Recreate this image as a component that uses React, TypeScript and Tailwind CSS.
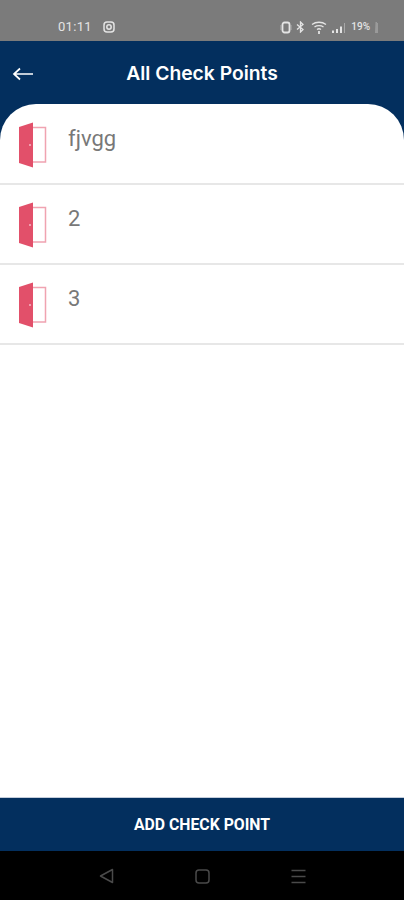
export default function App() {
  const rows = ["fjvgg", "2", "3"];
  return (
    <div className="flex h-[900px] w-[404px] flex-col overflow-hidden bg-white" style={{ fontFamily: "Roboto, sans-serif" }}>
      <div className="flex h-[41px] shrink-0 items-end justify-between bg-[#7b7b7b] pb-[6px] pl-[58px] pr-[26px] text-[#e4e4e4]">
        <div className="flex items-center gap-[11px]">
          <span className="text-[13px] leading-[16px] tracking-[0.3px]">01:11</span>
          <svg width="12" height="12" viewBox="0 0 12 12" fill="none" stroke="#e4e4e4" strokeWidth="1.5">
            <rect x="1" y="1" width="10" height="10" rx="3" />
            <circle cx="6" cy="6" r="2.2" />
          </svg>
        </div>
        <div className="flex items-center gap-[4px]">
          <svg width="12" height="13" viewBox="0 0 12 13" fill="none">
            <rect x="2.5" y="1.5" width="7" height="10" rx="2" stroke="#e4e4e4" strokeWidth="1.8" />
            <path d="M1 4v5M11 4v5" stroke="#bdbdbd" strokeWidth="0.8" />
          </svg>
          <svg width="9" height="12" viewBox="0 0 9 12" fill="none" stroke="#e4e4e4" strokeWidth="1.3">
            <path d="M1 3.5l6 5L4.5 11V1L7 3.500l-6 5" />
          </svg>
          <svg width="17" height="13" viewBox="0 0 17 13" fill="none" stroke="#e4e4e4" strokeWidth="1.3" className="ml-[2px]">
            <path d="M1 3.500C5 .5 11 .5 15 3.500M3.500 6C6 4.200 10 4.200 12.500 6M6 8.500C7.200 7.600 8.800 7.600 10 8.500" />
            <path d="M8 10v3" strokeWidth="1.800" />
          </svg>
          <svg width="14" height="10" viewBox="0 0 14 10" fill="#e4e4e4" className="mt-[2px]">
            <rect x="0" y="7.500" width="2" height="2.500" />
            <rect x="4" y="6" width="2" height="4" />
            <rect x="8" y="3.500" width="2" height="6.500" />
            <rect x="12" y="0" width="1" height="10" fill="#a8a8a8" />
          </svg>
          <span className="ml-[1px] text-[10px] font-medium leading-[16px]">19%</span>
          <svg width="4" height="11" viewBox="0 0 4 11" fill="#a8a8a8">
            <path d="M1.500 0h1.500v1H4v10H1z" opacity="0.7" />
          </svg>
        </div>
      </div>

      <div className="relative flex h-[63px] shrink-0 items-start bg-[#032f5e]">
        <svg width="22" height="14" viewBox="0 0 22 14" fill="none" stroke="#ffffff" strokeWidth="1.700" className="absolute left-[12px] top-[26px]">
          <path d="M21 7H2M8 1.500L2 7l6 5.500" />
        </svg>
        <div className="mt-[19px] w-full text-center text-[19.300px] font-semibold leading-[26px] text-white" style={{ fontFamily: "Inter, sans-serif" }}>
          All Check Points
        </div>
      </div>

      <div className="flex-1 bg-[#032f5e]">
        <div className="h-full rounded-t-[36px] bg-white">
          {rows.map((r, i) => (
            <div key={i} className="flex items-start border-b-2 border-[#e7e7e7] pl-[18px]" style={{ height: i === 0 ? 81 : 80 }}>
              <svg width="29" height="46" viewBox="0 0 29 46" fill="none" className={i === 0 ? "mt-[18px]" : "mt-[17px]"}>
                <path d="M14 5.500H27.500V40H14" stroke="#f0a3b1" strokeWidth="1.500" />
                <path d="M1 5L15 0.500V45.500L1 41Z" fill="#e2506a" />
                <circle cx="12" cy="23" r="1" fill="#f6b8c4" />
              </svg>
              <span className={`ml-[21px] text-[22px] font-normal leading-[28px] text-[#787878] ${i === 0 ? "mt-[21px]" : "mt-[20px]"}`}>{r}</span>
            </div>
          ))}
        </div>
      </div>

      <div className="flex h-[54px] shrink-0 items-center justify-center border-t border-[#c4cddb] bg-[#032f5e] text-[15.800px] font-bold text-white">
        ADD CHECK POINT
      </div>

      <div className="flex h-[49px] shrink-0 items-center bg-black">
        <svg width="15" height="16" viewBox="0 0 15 16" fill="none" stroke="#4a4a4a" strokeWidth="1.500" className="ml-[99px] mt-[1px]">
          <path d="M13.500 1.500V14.500L1.500 8Z" strokeLinejoin="round" />
        </svg>
        <svg width="15" height="15" viewBox="0 0 15 15" fill="none" stroke="#4a4a4a" strokeWidth="1.500" className="ml-[81px] mt-[1px]">
          <rect x="1" y="1" width="13" height="13" rx="3" />
        </svg>
        <svg width="15" height="15" viewBox="0 0 15 15" fill="none" stroke="#4a4a4a" strokeWidth="1.500" className="ml-[81px] mt-[1px]">
          <path d="M0.500 1.500H14.500M0.500 7.500H14.500M0.500 13.500H14.500" />
        </svg>
      </div>
    </div>
  );
}
